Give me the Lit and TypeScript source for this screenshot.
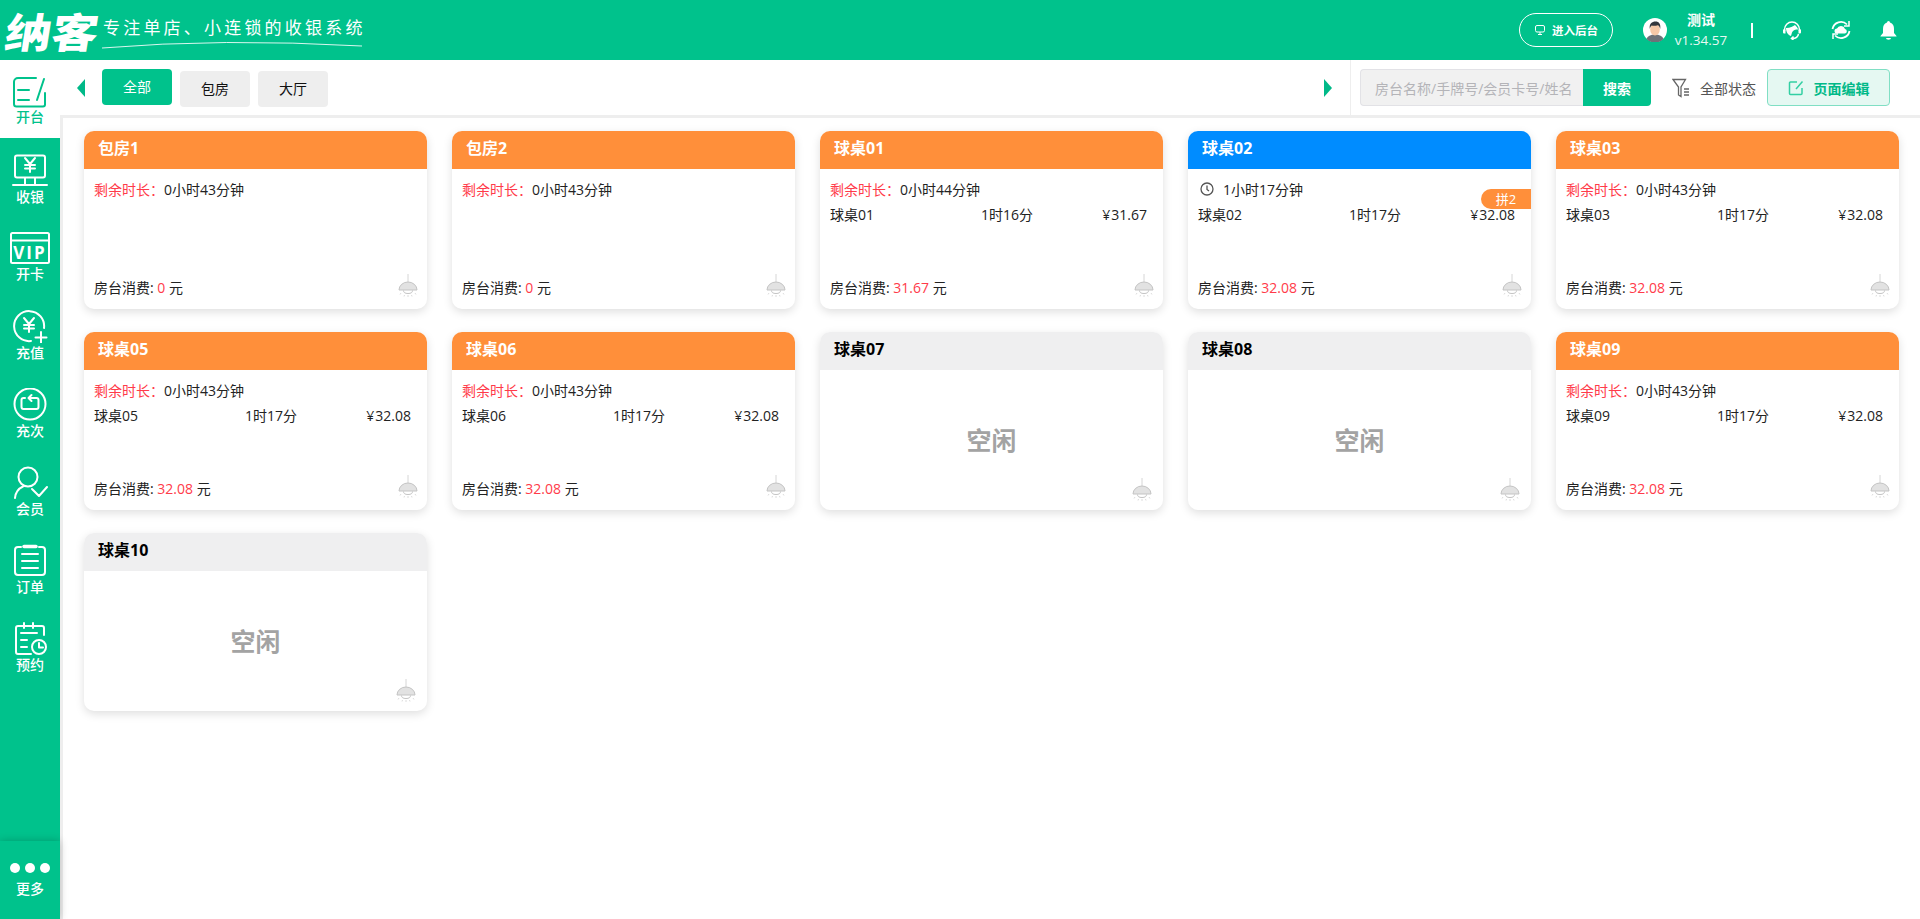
import { LitElement, html, svg, css, nothing } from 'lit';
import { customElement } from 'lit/decorators.js';

type Status = 'busy' | 'timer' | 'idle';

interface Room {
  name: string;
  status: Status;
  time?: string;
  row?: [string, string, string];
  total?: string;
  tag?: string;
}

const ROOMS: Room[] = [
  { name: '包房1', status: 'busy', time: '0小时43分钟', total: '0' },
  { name: '包房2', status: 'busy', time: '0小时43分钟', total: '0' },
  { name: '球桌01', status: 'busy', time: '0小时44分钟', row: ['球桌01', '1时16分', '31.67'], total: '31.67' },
  { name: '球桌02', status: 'timer', time: '1小时17分钟', row: ['球桌02', '1时17分', '32.08'], total: '32.08', tag: '拼2' },
  { name: '球桌03', status: 'busy', time: '0小时43分钟', row: ['球桌03', '1时17分', '32.08'], total: '32.08' },
  { name: '球桌05', status: 'busy', time: '0小时43分钟', row: ['球桌05', '1时17分', '32.08'], total: '32.08' },
  { name: '球桌06', status: 'busy', time: '0小时43分钟', row: ['球桌06', '1时17分', '32.08'], total: '32.08' },
  { name: '球桌07', status: 'idle' },
  { name: '球桌08', status: 'idle' },
  { name: '球桌09', status: 'busy', time: '0小时43分钟', row: ['球桌09', '1时17分', '32.08'], total: '32.08' },
  { name: '球桌10', status: 'idle' },
];

const yen = (x: number, y: number) => svg`
  <path d="M${x - 5} ${y - 7}l5 6 5-6M${x} ${y - 1}v8M${x - 5} ${y}h10M${x - 5} ${y + 3.5}h10" />`;

const NAV = [
  {
    label: '开台',
    icon: svg`<path d="M24 2H6a4 4 0 0 0-4 4v22a2.500 2.500 0 0 0 2.500 2.500H31a2 2 0 0 0 2-2V17" /><path d="M32 3l-7 21M6 14h11M6 24h11" />`,
  },
  {
    label: '收银',
    icon: svg`<rect x="3" y="1.500" width="30" height="22" rx="2" /><path d="M1 31h34M13 24v7M23 24v7" />${yen(18, 11)}`,
  },
  {
    label: '开卡',
    wide: true,
    icon: svg`<rect x="1" y="1" width="38" height="30" rx="1.500" /><path d="M1 8.500h38" /><text x="20" y="26.500" class="vip">VIP</text>`,
  },
  {
    label: '充值',
    icon: svg`<path d="M32 18A15 15 0 1 0 19 31" />${yen(17, 15)}<path d="M29 22v11M23.500 27.500h11" />`,
  },
  {
    label: '充次',
    icon: svg`<circle cx="18" cy="16" r="15.500" /><path d="M13 10h-1.500a2 2 0 0 0-2 2v7a2 2 0 0 0 2 2h13a2 2 0 0 0 2-2v-7a2 2 0 0 0-2-2H17" /><path d="M19.500 7l-3 3 3 3" />`,
  },
  {
    label: '会员',
    icon: svg`<circle cx="16" cy="11" r="9.500" /><path d="M3 32a14 14 0 0 1 8-11.500M20 23l7 7 8-9" />`,
  },
  {
    label: '订单',
    icon: svg`<path d="M9 3H6a3 3 0 0 0-3 3v22a3 3 0 0 0 3 3h24a3 3 0 0 0 3-3V6a3 3 0 0 0-3-3h-3" /><path d="M12 2.500h12" stroke-width="3.500" /><path d="M10 10h16M10 17h16M10 24h16" />`,
  },
  {
    label: '预约',
    icon: svg`<path d="M32 13V6a2 2 0 0 0-2-2H6a2 2 0 0 0-2 2v24a2 2 0 0 0 2 2h13" /><path d="M12 1v5M21 1v5M9 11h16M9 18h6M9 25h6" /><circle cx="27" cy="25" r="7" /><path d="M27 21v4.500h4" />`,
  },
];

const lamp = html`<svg class="lamp" viewBox="0 0 20 23" fill="none" stroke="#c4c4c4" stroke-width="1">
  <path d="M10 0v8" stroke="#d6d6d6" />
  <path d="M1 16a9 8 0 0 1 18 0z" fill="#e2e2e2" />
  <path d="M5.500 16.500a4.500 3 0 0 0 9 0" />
  <path d="M3 19l-1 1.500M10 21v2M17 19l1 1.500M6.500 21l-.5 1.500M13.500 21l.5 1.500" stroke="#dcdcdc" />
</svg>`;

@customElement('app-root')
export class AppRoot extends LitElement {
  static styles = css`
    :host {
      display: flex;
      flex-direction: column;
      height: 100vh;
      min-height: 919px;
      overflow: hidden;
      background: #fff;
      font-family: 'Open Sans', 'Noto Sans CJK SC', sans-serif;
      font-size: 14px;
      color: #222;
    }

    /* top bar */
    .header {
      flex: none;
      height: 60px;
      display: flex;
      align-items: center;
      background: #00c28c;
      color: #fff;
      padding-right: 23px;
    }
    .logo {
      display: flex;
      align-items: center;
      padding-left: 6px;
      position: relative;
      height: 60px;
      width: 360px;
      flex: none;
    }
    .logo-mark {
      font-size: 41px;
      font-weight: 900;
      line-height: 56px;
      white-space: nowrap;
      flex: none;
      transform-origin: left center;
      transform: scaleX(1.13) skewX(-8deg);
      font-family: 'Noto Sans CJK SC', sans-serif;
    }
    .logo-text {
      font-size: 17px;
      font-weight: 400;
      letter-spacing: 3.200px;
      margin-left: 15px;
      margin-top: -7px;
      white-space: nowrap;
      flex: none;
    }
    .logo-line {
      position: absolute;
      left: 101px;
      top: 38px;
      width: 262px;
      height: 12px;
    }
    .spacer { flex: 1; }
    .admin {
      display: flex;
      align-items: center;
      justify-content: center;
      gap: 6px;
      width: 94px;
      height: 34px;
      box-sizing: border-box;
      border: 1px solid #fff;
      border-radius: 17px;
      font-size: 11.500px;
      font-weight: 700;
    }
    .avatar { width: 24px; height: 24px; margin-left: 30px; }
    .user {
      width: 60px;
      margin-left: 4px;
      text-align: center;
      line-height: 20px;
    }
    .user b { display: block; font-size: 14px; font-weight: 700; }
    .user span { display: block; font-size: 13.500px; opacity: .9; }
    .sep { width: 2px; height: 15px; background: #fff; margin: 0 29px 0 20px; }
    .hicon { width: 20px; height: 20px; margin-right: 29px; }
    .hicon.last { width: 17px; margin-right: 0; }

    /* body */
    .body { flex: 1; display: flex; min-height: 0; }
    .side {
      flex: none;
      width: 60px;
      display: flex;
      flex-direction: column;
      background: #00c28c;
      color: #fff;
    }
    .nav {
      height: 78px;
      box-sizing: border-box;
      padding-top: 16px;
      display: flex;
      flex-direction: column;
      align-items: center;
    }
    .nav.active { background: #fff; color: #00c28c; }
    .nav svg {
      width: 36px;
      height: 33px;
      fill: none;
      stroke: currentColor;
      stroke-width: 2;
      stroke-linecap: round;
      stroke-linejoin: round;
      flex: none;
    }
    .nav svg.wide { width: 40px; height: 32px; }
    .nav .vip {
      font-size: 17px;
      font-weight: 700;
      letter-spacing: 2px;
      text-anchor: middle;
      fill: currentColor;
      stroke: none;
      font-family: 'Open Sans', sans-serif;
    }
    .nav span {
      font-size: 14px;
      font-weight: 500;
      line-height: 20px;
    }
    .nav.active span { margin-top: -2px; }
    .more {
      margin-top: auto;
      height: 78px;
      display: flex;
      flex-direction: column;
      align-items: center;
      box-sizing: border-box;
      padding-top: 22px;
      box-shadow: 0 0 8px rgba(0, 0, 0, .22);
      position: relative;
    }
    .dots { display: flex; gap: 5px; }
    .dots i { width: 10px; height: 10px; border-radius: 50%; background: #fff; }
    .more span { font-size: 14px; font-weight: 500; line-height: 20px; margin-top: 6px; }

    .main { flex: 1; min-width: 0; display: flex; flex-direction: column; }
    .bar {
      flex: none;
      height: 55px;
      display: flex;
      align-items: center;
      padding-left: 17px;
    }
    .arrow { width: 0; height: 0; border: 9px solid transparent; }
    .arrow.left { border-left-width: 0; border-right: 8px solid #00b988; margin-right: 17px; }
    .arrow.right { border-right-width: 0; border-left: 8px solid #00b988; margin-right: 18px; }
    .tabs { display: flex; gap: 8px; flex: 1; }
    .tab {
      width: 70px;
      height: 36px;
      box-sizing: border-box;
      padding-bottom: 2px;
      margin-top: 2px;
      display: flex;
      align-items: center;
      justify-content: center;
      background: #eee;
      border-radius: 4px;
      color: #111;
      font-size: 14px;
    }
    .tab.on { background: #00c28c; color: #fff; margin-top: 0; }
    .tools {
      height: 55px;
      border-left: 1px solid #eee;
      display: flex;
      align-items: center;
      padding: 0 30px 0 9px;
    }
    .search {
      width: 223px;
      height: 37px;
      box-sizing: border-box;
      padding-left: 14px;
      display: flex;
      align-items: center;
      background: #f1f1f1;
      border: 1px solid #e2e2e6;
      border-right: 0;
      border-radius: 4px 0 0 4px;
      color: #b4b4b8;
      white-space: nowrap;
      overflow: hidden;
    }
    .go {
      width: 68px;
      height: 37px;
      display: flex;
      align-items: center;
      justify-content: center;
      background: #00c28c;
      color: #fff;
      font-weight: 700;
      border-radius: 0 4px 4px 0;
    }
    .filter { width: 18px; height: 20px; margin: 0 10px 0 21px; }
    .state { color: #555; margin-right: 11px; white-space: nowrap; }
    .edit {
      width: 123px;
      height: 37px;
      box-sizing: border-box;
      display: flex;
      align-items: center;
      justify-content: center;
      gap: 10px;
      background: #e5f8f2;
      border: 1px solid #80dfc4;
      border-radius: 4px;
      color: #00b988;
      font-weight: 700;
    }
    .edit svg { width: 16px; height: 16px; }

    .grid {
      flex: 1;
      border-top: 3px solid #eee;
      border-left: 3px solid #eee;
      padding: 13px 21px 0 21px;
      display: grid;
      grid-template-columns: repeat(5, 1fr);
      grid-auto-rows: 178px;
      gap: 23px 25px;
      align-content: start;
    }
    .card {
      position: relative;
      display: flex;
      flex-direction: column;
      border-radius: 10px;
      background: #fff;
      box-shadow: 0 3px 10px rgba(0, 0, 0, .13);
      overflow: hidden;
    }
    .head {
      flex: none;
      height: 38px;
      line-height: 34px;
      padding-left: 14px;
      font-size: 16px;
      font-weight: 700;
      color: #fff;
    }
    .busy .head { background: #ff8f3a; }
    .timer .head { background: #008cff; }
    .idle .head { background: #efeff0; color: #000; }
    .content { flex: 1; display: flex; flex-direction: column; padding: 8px 16px 0 10px; min-height: 0; }
    .time { height: 24px; display: flex; align-items: center; }
    .time em { font-style: normal; color: #ff3b4a; }
    .time svg { width: 14px; height: 14px; margin: 0 9px 0 2px; }
    .row {
      display: grid;
      grid-template-columns: 151px 1fr auto;
      line-height: 24px;
      height: 24px;
      margin-top: 2px;
    }
    .row i { font-style: normal; margin-right: 1px; }
    .foot {
      margin-top: auto;
      margin-right: -7px;
      padding-bottom: 9px;
      display: flex;
      align-items: flex-end;
      justify-content: space-between;
    }
    .foot span { line-height: 24px; }
    .foot b { font-weight: 400; color: #ff3b4a; }
    .lamp { width: 20px; height: 23px; flex: none; margin-bottom: 3px; }
    .free {
      flex: 1;
      display: flex;
      align-items: center;
      justify-content: center;
      font-size: 25px;
      font-weight: 700;
      color: #a3a3a3;
      padding-bottom: 2px;
    }
    .idle .lamp { position: absolute; right: 11px; bottom: 9px; margin: 0; }
    .tag {
      position: absolute;
      right: 0;
      top: 58px;
      width: 50px;
      height: 20px;
      line-height: 20px;
      text-align: center;
      background: #ff8f3a;
      color: #fff;
      font-size: 13px;
      border-radius: 10px 0 0 10px;
    }
  `;

  private renderCard(r: Room) {
    if (r.status === 'idle') {
      return html`<div class="card idle">
        <div class="head">${r.name}</div>
        <div class="free">空闲</div>
        ${lamp}
      </div>`;
    }
    return html`<div class="card ${r.status}">
      <div class="head">${r.name}</div>
      <div class="content">
        <div class="time">
          ${r.status === 'timer'
            ? html`<svg viewBox="0 0 14 14" fill="none" stroke="#555" stroke-width="1.300">
                <circle cx="7" cy="7" r="6" /><path d="M7 3.500V7.500l2 1.500" />
              </svg>`
            : html`<em>剩余时长：</em>`}
          ${r.time}
        </div>
        ${r.row
          ? html`<div class="row">
              <span>${r.row[0]}</span><span>${r.row[1]}</span><span><i>¥</i>${r.row[2]}</span>
            </div>`
          : nothing}
        <div class="foot">
          <span>房台消费: <b>${r.total}</b> 元</span>
          ${lamp}
        </div>
      </div>
      ${r.tag ? html`<div class="tag">${r.tag}</div>` : nothing}
    </div>`;
  }

  render() {
    return html`
      <div class="header">
        <div class="logo">
          <span class="logo-mark">纳客</span>
          <span class="logo-text">专注单店、小连锁的收银系统</span>
          <svg class="logo-line" viewBox="0 0 262 12" fill="none">
            <path d="M1 10Q120 0 261 8" stroke="#fff" stroke-width="1" opacity=".85" />
          </svg>
        </div>
        <div class="spacer"></div>
        <div class="admin">
          <svg width="12" height="12" viewBox="0 0 12 12" fill="none" stroke="#fff" stroke-width="1">
            <rect x="1.500" y="1.500" width="9" height="6.500" rx="1.500" /><path d="M4 10.500h4M6 8v2.500" />
          </svg>
          进入后台
        </div>
        <svg class="avatar" viewBox="0 0 24 24">
          <circle cx="12" cy="12" r="12" fill="#fff" />
          <path d="M3.500 21c1-3 4-4.500 8.500-4.500s7.500 1.500 8.500 4.500a12 12 0 0 1-17 0z" fill="#6d7278" />
          <ellipse cx="12" cy="11.500" rx="4.800" ry="6" fill="#f6c9a8" />
          <path d="M6.800 11C6 5.500 9 3.500 12.500 3.500S18 6 17.200 11c-.5-2.500-1.500-3.500-2.500-3.800-2 .8-4.500.8-6 .3-.8.700-1.500 1.800-1.900 3.500z" fill="#33373d" />
        </svg>
        <div class="user"><b>测试</b><span>v1.34.57</span></div>
        <div class="sep"></div>
        <svg class="hicon" viewBox="0 0 20 20" fill="none" stroke="#fff" stroke-width="1.500">
          <path d="M2.500 11V9.500a7.500 7.500 0 0 1 15 0V11" />
          <path d="M1 9.500h2.500v4H2a1 1 0 0 1-1-1zM19 9.500h-2.500v4H18a1 1 0 0 0 1-1z" fill="#fff" stroke="none" />
          <path d="M4 8c4.500 0 7-1.500 9-3 1.500 1.500 3 3 3 4.500-2.500 0-5 .5-6 3l-1 3.500C6 15 4 12 4 8z" fill="#fff" stroke="none" />
          <path d="M16.500 14c-.5 2.500-3 4.500-6 4.500M11.500 16.500l-2 2 2 1.500" />
        </svg>
        <svg class="hicon" viewBox="0 0 20 20" fill="none" stroke="#fff" stroke-width="1.800">
          <path d="M1.500 9A8.500 8.500 0 0 1 16 4.500M18.500 11A8.500 8.500 0 0 1 4 15.500" />
          <path d="M18 1v5h-5M2 19v-5h5" stroke-width="1.500" />
          <path d="M6 13.500a2.500 2.500 0 0 1 0-5 4.300 4.300 0 0 1 8 .5 2.300 2.300 0 0 1 0 4.500z" fill="#fff" stroke="none" />
        </svg>
        <svg class="hicon last" viewBox="0 0 17 20" fill="#fff">
          <path d="M8.500 1a1.500 1.500 0 0 1 1.500 1.500C13 3.500 14 6 14 9v4l2.500 3v.5H.5V16L3 13V9c0-3 1-5.500 4-6.500A1.500 1.500 0 0 1 8.500 1z" />
          <path d="M6 18h5a2.500 1.800 0 0 1-5 0z" />
        </svg>
      </div>

      <div class="body">
        <div class="side">
          ${NAV.map(
            (n, i) => html`<div class="nav ${i === 0 ? 'active' : ''}">
              <svg class=${n.wide ? 'wide' : ''} viewBox=${n.wide ? '0 0 40 32' : '0 0 36 33'}>${n.icon}</svg>
              <span>${n.label}</span>
            </div>`,
          )}
          <div class="more">
            <div class="dots"><i></i><i></i><i></i></div>
            <span>更多</span>
          </div>
        </div>

        <div class="main">
          <div class="bar">
            <div class="arrow left"></div>
            <div class="tabs">
              <div class="tab on">全部</div>
              <div class="tab">包房</div>
              <div class="tab">大厅</div>
            </div>
            <div class="arrow right"></div>
            <div class="tools">
              <div class="search">房台名称/手牌号/会员卡号/姓名</div>
              <div class="go">搜索</div>
              <svg class="filter" viewBox="0 0 18 20" fill="none" stroke="#666" stroke-width="1.300">
                <path d="M1 1.500h12.500L9 9v9.500L6.500 17V9zM12 11h5M12 14h5M12 17h5" />
              </svg>
              <span class="state">全部状态</span>
              <div class="edit">
                <svg viewBox="0 0 16 16" fill="none" stroke="#33cfa3" stroke-width="1.500">
                  <path d="M9 2H2.500a1 1 0 0 0-1 1v10.500a1 1 0 0 0 1 1H13a1 1 0 0 0 1-1V8" />
                  <path d="M14.500 1.500L8 9" />
                </svg>
                页面编辑
              </div>
            </div>
          </div>
          <div class="grid">${ROOMS.map((r) => this.renderCard(r))}</div>
        </div>
      </div>
    `;
  }
}
